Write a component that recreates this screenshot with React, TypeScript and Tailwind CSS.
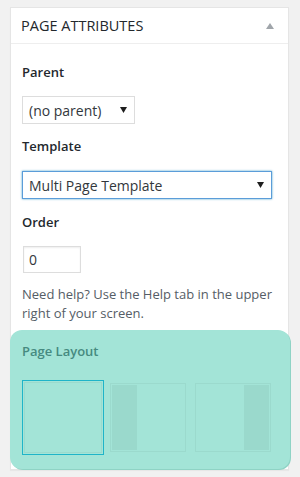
const layouts = [
    { id: "full", sidebar: null as null | "left" | "right", selected: true },
    { id: "left", sidebar: "left" as const, selected: false },
    { id: "right", sidebar: "right" as const, selected: false },
];

function Caret() {
    return (
        <svg width="7" height="6" viewBox="0 0 7 6" className="shrink-0">
            <path d="M0 0 H7 L3.5 6 Z" fill="#1e1e1e" />
        </svg>
    );
}

export default function App() {
    return (
        <div
            className="min-h-[477px] w-[300px] bg-[#f1f1f1] pl-[10px] pt-[7px]"
            style={{ fontFamily: '"Open Sans", "Liberation Sans", sans-serif' }}
        >
            <div className="w-[279px] border border-[#e5e5e5] bg-white shadow-[0_1px_1px_rgba(0,0,0,0.04)]">
                {/* header */}
                <div className="flex h-[36px] items-center justify-between border-b border-[#eeeeee] pl-[10px] pr-[14px]">
                    <h2 className="text-[14.5px] font-normal uppercase leading-[19.6px] text-[#23282d]">
                        Page Attributes
                    </h2>
                    <svg width="8" height="6" viewBox="0 0 8 6">
                        <path d="M4 0 L8 6 H0 Z" fill="#a0a5aa" />
                    </svg>
                </div>

                {/* body */}
                <div className="pl-[11px] pr-[12px] pt-[19px]">
                    <p className="text-[13px] font-semibold leading-[18px] text-[#23282d]">Parent</p>
                    <div className="mt-[15px] flex h-[28px] w-[113px] items-center justify-between border border-[#dddddd] bg-white pl-[6px] pr-[7px] text-[14px] text-[#32373c]">
                        <span>(no parent)</span>
                        <Caret />
                    </div>

                    <p className="mt-[13px] text-[13px] font-semibold leading-[18px] text-[#23282d]">Template</p>
                    <div className="mt-[16px] flex h-[28px] w-[250px] items-center justify-between border border-[#5b9dd9] bg-white pl-[6px] pr-[7px] text-[14px] text-[#32373c] shadow-[0_0_2px_rgba(30,140,190,0.8)]">
                        <span>Multi Page Template</span>
                        <Caret />
                    </div>

                    <p className="mt-[14px] text-[13px] font-semibold leading-[18px] text-[#23282d]">Order</p>
                    <div className="ml-[1px] mt-[15px] flex h-[27px] w-[58px] items-center border border-[#dddddd] bg-white px-[5px] text-[14px] text-[#32373c] shadow-[inset_0_1px_2px_rgba(0,0,0,0.07)]">
                        0
                    </div>

                    <p className="mt-[12px] text-[13px] leading-[19px] text-[#555d66]">
                        Need help? Use the Help tab in the upper right of your screen.
                    </p>

                    {/* page layout picker */}
                    <div className="ml-[-12px] mt-[7px] w-[280px] rounded-[12px] bg-[#a3e4d7] pb-[14px] pl-[12px] pt-[12px] shadow-[1px_1px_0_#8fd3c5]">
                        <p className="text-[13px] font-semibold leading-[18px] text-[#468a80]">Page Layout</p>
                        <div className="mt-[20px] flex gap-[3px]">
                            {layouts.map((l) => (
                                <div
                                    key={l.id}
                                    className={
                                        l.selected
                                            ? "h-[75px] w-[82px] border border-[#1fb4c8] p-[1px]"
                                            : "h-[75px] w-[82px] border border-transparent p-[2px]"
                                    }
                                >
                                    <div
                                        className={
                                            l.sidebar === "right"
                                                ? "flex h-full justify-end border border-[#9bdacd] p-[1px]"
                                                : "flex h-full border border-[#9bdacd] p-[1px]"
                                        }
                                    >
                                        {l.sidebar && <div className="h-full w-[25px] bg-[#9ad9cc]" />}
                                    </div>
                                </div>
                            ))}
                        </div>
                    </div>
                </div>
            </div>
        </div>
    );
}
